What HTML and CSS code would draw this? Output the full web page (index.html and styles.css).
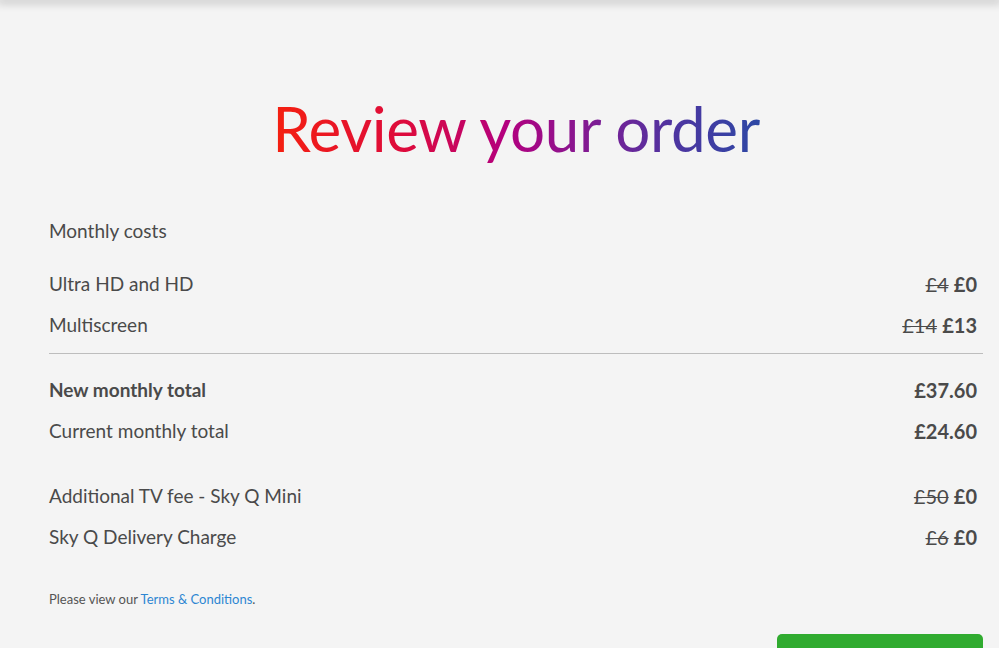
FILE: index.html
```html
<!DOCTYPE html>
<html lang="en">
<head>
<meta charset="utf-8">
<title>Review your order</title>
<link rel="stylesheet" href="styles.css">
</head>
<body>
<div class="topbar"></div>
<main class="page">
  <h1 class="title">Review your order</h1>
  <section class="summary">
    <h2 class="section-label">Monthly costs</h2>
    <div class="row"><span>Ultra HD and HD</span><span class="price"><s>£4</s> <b>£0</b></span></div>
    <div class="row"><span>Multiscreen</span><span class="price"><s>£14</s> <b>£13</b></span></div>
    <hr class="divider">
    <div class="row row-strong"><span>New monthly total</span><span class="price"><b>£37.60</b></span></div>
    <div class="row"><span>Current monthly total</span><span class="price"><b>£24.60</b></span></div>
    <div class="group-gap"></div>
    <div class="row"><span>Additional TV fee - Sky Q Mini</span><span class="price"><s>£50</s> <b>£0</b></span></div>
    <div class="row"><span>Sky Q Delivery Charge</span><span class="price"><s>£6</s> <b>£0</b></span></div>
    <p class="terms">Please view our <a href="#">Terms &amp; Conditions</a>.</p>
    <div class="actions"><button class="btn" aria-label="Confirm order"></button></div>
  </section>
</main>
</body>
</html>
```
FILE: styles.css
```css
html, body {
  margin: 0;
  padding: 0;
  background: #f4f4f4;
  font-family: "Lato", "Open Sans", sans-serif;
  color: #4a4a4a;
  overflow: hidden;
  height: 648px;
}
.topbar {
  height: 0;
  box-shadow: 0 0 10px 3px rgba(0,0,0,0.22);
}
.page {
  padding: 0 16px 0 49px;
}
.title {
  margin: 88px auto 0;
  text-align: center;
  font-weight: 400;
  font-size: 62px;
  line-height: 80px;
  letter-spacing: -0.4px;
  background: linear-gradient(90deg, #f5200f 0%, #dc0a3e 28%, #b3007f 48%, #7e1c94 66%, #4e34a0 82%, #2d48a5 100%);
  -webkit-background-clip: text;
  background-clip: text;
  color: transparent;
  width: max-content;
}
.summary {
  margin-top: 50px;
}
.section-label {
  margin: 0 0 20px;
  font-size: 19px;
  font-weight: 400;
  line-height: 26px;
}
.row {
  display: flex;
  justify-content: space-between;
  align-items: center;
  font-size: 19px;
  line-height: 26px;
  padding: 7px 6px 8px 0;
}
.row-strong span:first-child { font-weight: 700; }
.price { font-size: 20px; }
.price s { color: #4a4a4a; text-decoration-thickness: 1px; }
.price b { font-weight: 700; }
.divider {
  border: 0;
  border-top: 1px solid #bdbdbd;
  margin: 7px 0 16px;
}
.group-gap { height: 24px; }
.terms {
  margin: 32px 0 0;
  font-size: 13px;
  line-height: 18px;
  color: #555;
}
.terms a { color: #2d86d2; text-decoration: none; }
.actions {
  display: flex;
  justify-content: flex-end;
  margin-top: 26px;
}
.btn {
  width: 206px;
  height: 48px;
  background: #30ab2f;
  border: 0;
  border-radius: 5px;
}
```
